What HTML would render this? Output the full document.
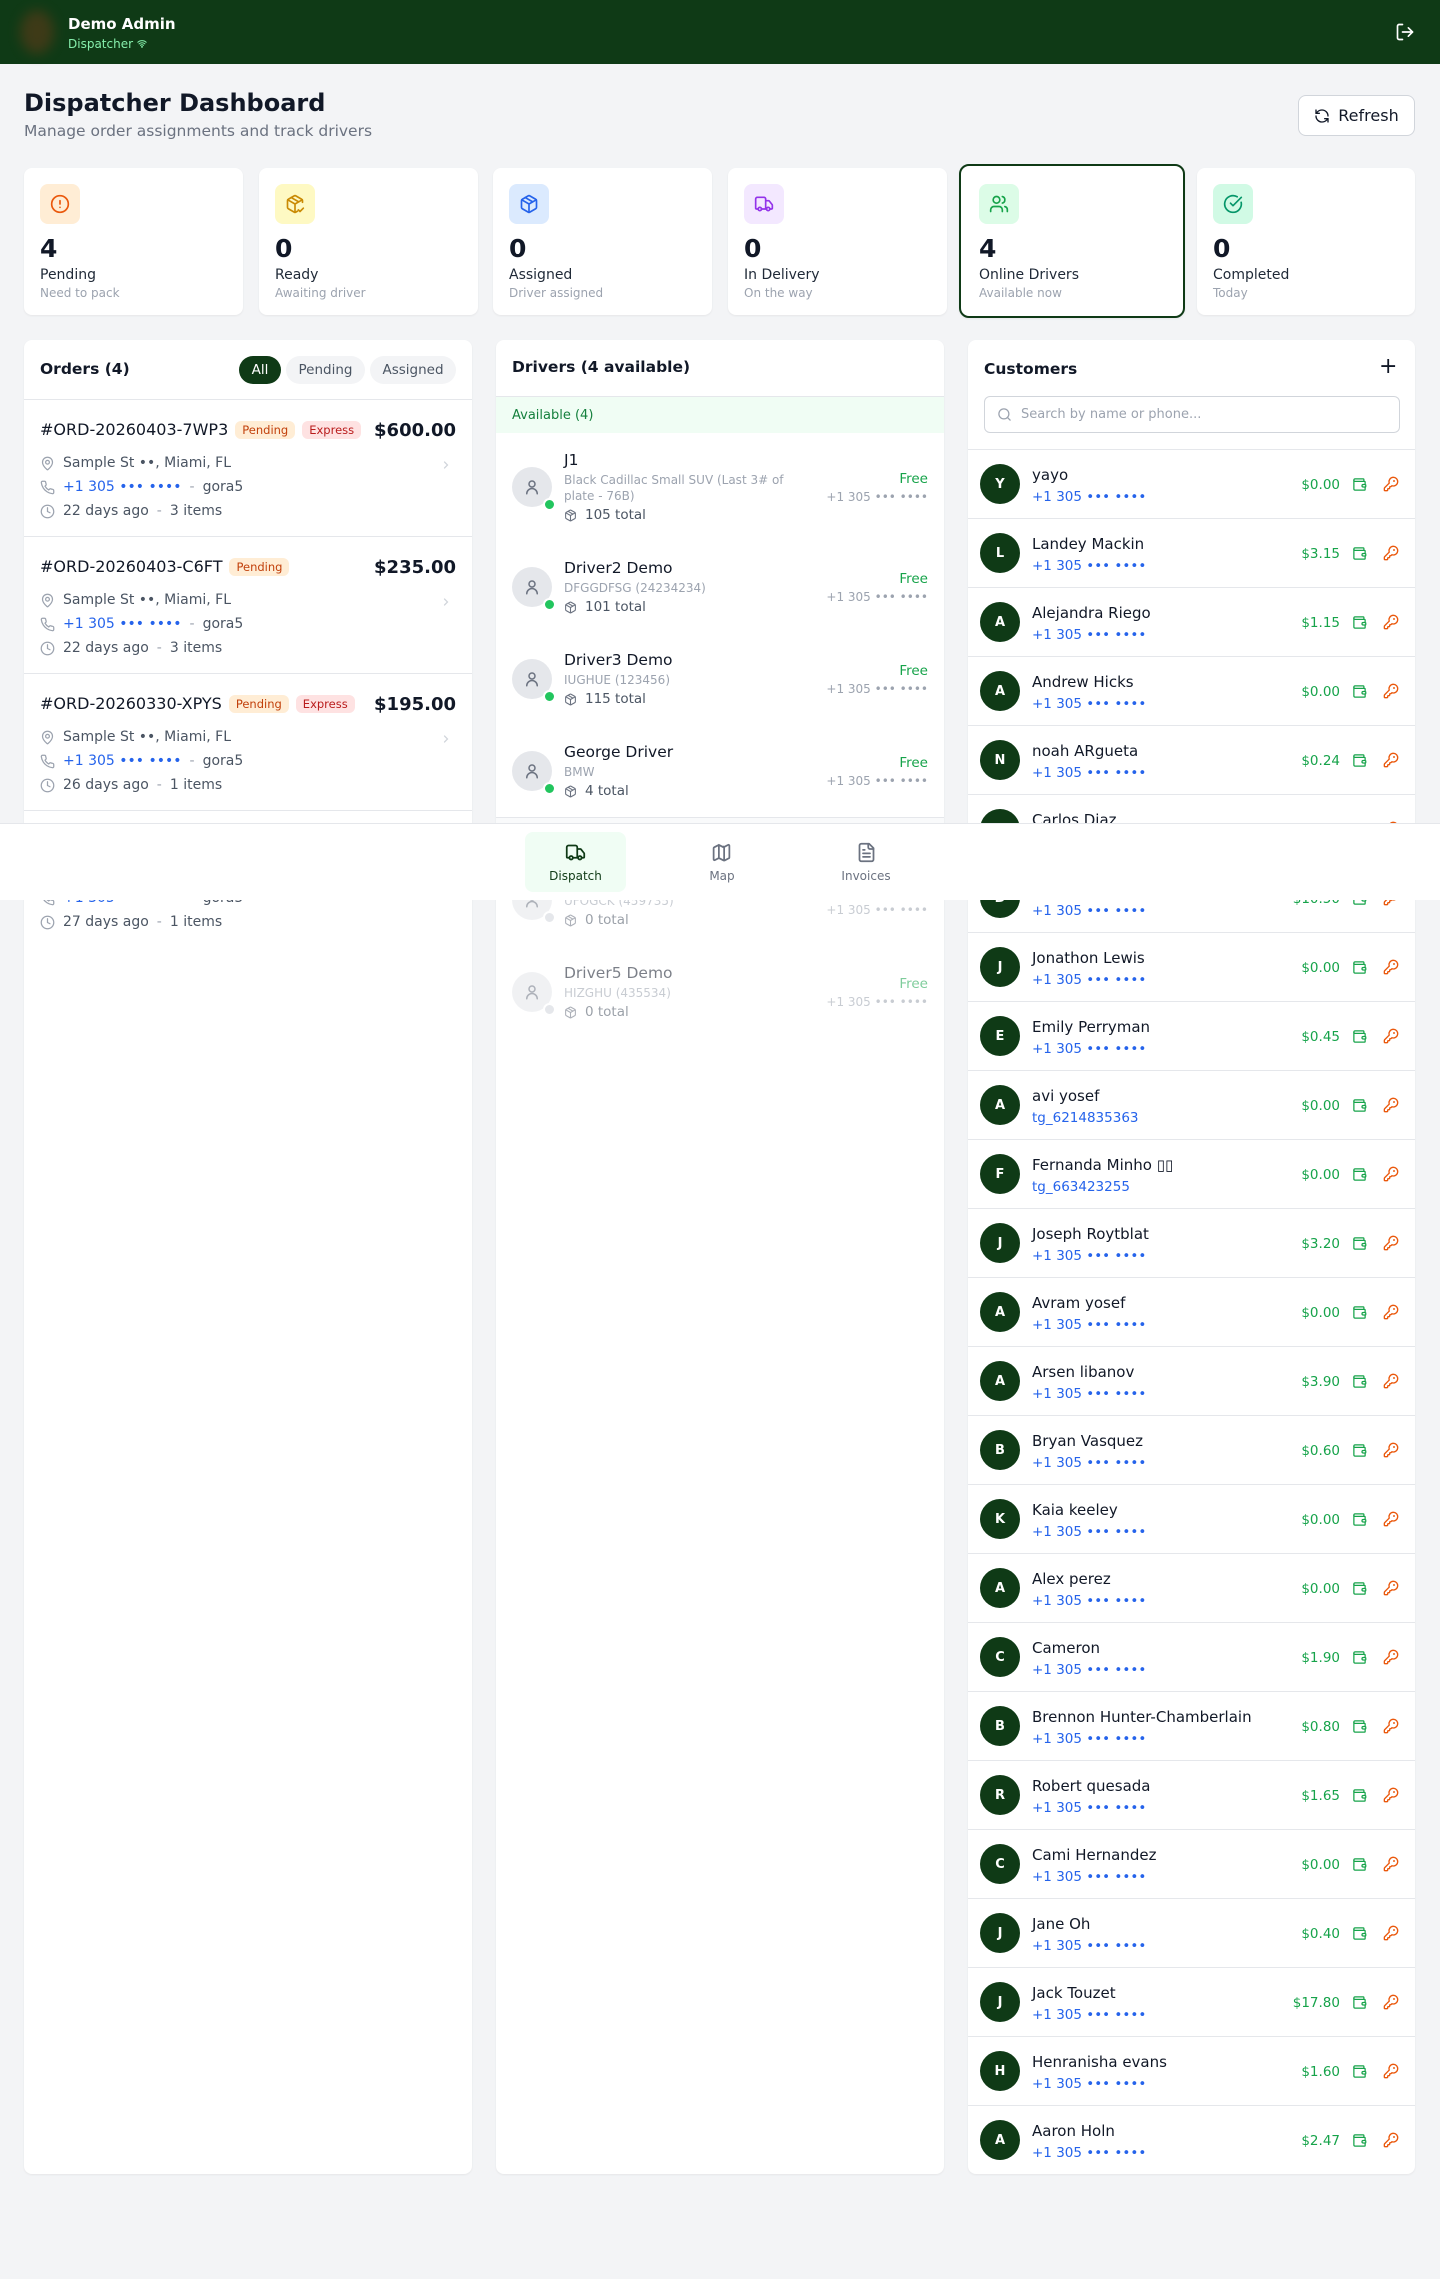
<!DOCTYPE html>
<html><head><meta charset="utf-8"><style>
*{box-sizing:border-box;margin:0;padding:0}
body{width:1440px;height:2279px;background:#f3f4f6;font-family:"DejaVu Sans","Liberation Sans","Noto Sans CJK SC",sans-serif;color:#111827;position:relative;overflow:hidden}
.abs{position:absolute}
.hdr{left:0;top:0;width:1440px;height:64px;background:#0f3a16}
.card{background:#fff;border-radius:8px;box-shadow:0 1px 2px rgba(0,0,0,.06)}
.stat{top:168px;width:219px;height:147px}
.ib{position:absolute;left:16px;top:16px;width:40px;height:40px;border-radius:8px;display:flex;align-items:center;justify-content:center}
.sn{position:absolute;left:16px;top:66px;font-size:25px;font-weight:bold}
.sl{position:absolute;left:16px;top:99px;font-size:14px;color:#1f2937}
.ss{position:absolute;left:16px;top:118px;font-size:12px;color:#9ca3af}
.ord{position:absolute;left:0;width:448px;height:137px;border-bottom:1px solid #e5e7eb}
.oid{position:absolute;left:16px;top:20px;font-size:16px;color:#111827;display:flex;align-items:center;gap:7px;white-space:nowrap}
.b{font-size:11.5px;padding:2px 7px;border-radius:6px}
.bp{background:#ffedd5;color:#c2410c}.be{background:#fee2e2;color:#b91c1c}
.amt{position:absolute;right:16px;top:20px;font-size:18px;font-weight:bold}
.ol{position:absolute;left:16px;font-size:14px;color:#4b5563;display:flex;align-items:center;gap:8px;white-space:nowrap}
.ol svg{flex:none}
.ph{color:#2563eb}
.chev{position:absolute;right:20px;top:57px}
.drv{position:absolute;left:0;width:448px}
.av{position:absolute;left:16px;width:40px;height:40px;border-radius:50%;background:#e5e7eb;display:flex;align-items:center;justify-content:center}
.dot{position:absolute;right:-4px;bottom:-4px;width:13px;height:13px;border-radius:50%;background:#22c55e;border:2px solid #fff}
.dn{position:absolute;left:68px;font-size:15.5px;color:#111827;line-height:18px}
.dsub{position:absolute;left:68px;font-size:12px;color:#9ca3af;line-height:16px;width:240px}
.dt{position:absolute;left:68px;font-size:13.5px;color:#4b5563;display:flex;align-items:center;gap:8px;line-height:16px}
.free{position:absolute;right:16px;font-size:13.5px;color:#16a34a;line-height:16px}
.dph{position:absolute;right:16px;font-size:12px;color:#9ca3af;line-height:16px}
.cr{position:absolute;left:0;width:448px;height:69px;border-bottom:1px solid #e5e7eb}
.ca{position:absolute;left:12px;top:14px;width:40px;height:40px;border-radius:50%;background:#0f3a16;color:#fff;font-weight:bold;font-size:13px;display:flex;align-items:center;justify-content:center}
.cn{position:absolute;left:64px;top:16px;font-size:15px;color:#111827;white-space:nowrap}
.cp{position:absolute;left:64px;top:39px;font-size:13.5px;color:#2563eb;white-space:nowrap}
.cm{position:absolute;right:76px;top:27px;font-size:13.5px;color:#16a34a}
.cw{position:absolute;right:49px;top:27px}
.ck{position:absolute;right:17px;top:26px}
</style></head><body>

<div class="abs hdr">
  <div class="abs" style="left:20px;top:10px;width:34px;height:44px;border-radius:50%;background:#4a3a18;filter:blur(6px);opacity:.8"></div>
  <div class="abs" style="left:68px;top:15px;color:#fff;font-weight:bold;font-size:15px">Demo Admin</div>
  <div class="abs" style="left:68px;top:37px;color:#86efac;font-size:12px">Dispatcher <svg width="10" height="9" viewBox="0 0 24 20" fill="none" stroke="#86efac" stroke-width="2.5" stroke-linecap="round"><path d="M2 7a15 15 0 0 1 20 0M5 11a10 10 0 0 1 14 0M8.5 14.5a5 5 0 0 1 7 0"/><circle cx="12" cy="18" r="1"/></svg></div>
  <svg class="abs" style="left:1395px;top:22px" width="20" height="20" viewBox="0 0 24 24" fill="none" stroke="#fff" stroke-width="2" stroke-linecap="round" stroke-linejoin="round"><path d="M9 21H5a2 2 0 0 1-2-2V5a2 2 0 0 1 2-2h4"/><path d="M16 17l5-5-5-5"/><path d="M21 12H9"/></svg>
</div>

<div class="abs" style="left:24px;top:89px;font-size:24px;font-weight:bold">Dispatcher Dashboard</div>
<div class="abs" style="left:24px;top:122px;font-size:15.5px;color:#6b7280">Manage order assignments and track drivers</div>
<div class="abs" style="left:1298px;top:95px;width:117px;height:41px;background:#fff;border:1px solid #d1d5db;border-radius:8px;display:flex;align-items:center;justify-content:center;gap:8px;font-size:16px">
<svg width="16" height="16" viewBox="0 0 24 24" fill="none" stroke="#111827" stroke-width="2" stroke-linecap="round" stroke-linejoin="round"><path d="M21 12a9 9 0 0 0-9-9 9.75 9.75 0 0 0-6.74 2.74L3 8"/><path d="M3 3v5h5"/><path d="M3 12a9 9 0 0 0 9 9 9.75 9.75 0 0 0 6.74-2.74L21 16"/><path d="M16 16h5v5"/></svg>Refresh</div>

<!-- stats -->
<div class="abs card stat" style="left:24px"><div class="ib" style="background:#ffedd5"><svg width="20" height="20" viewBox="0 0 24 24" fill="none" stroke="#ea580c" stroke-width="2" stroke-linecap="round"><circle cx="12" cy="12" r="10"/><path d="M12 8v4M12 16h.01"/></svg></div><div class="sn">4</div><div class="sl">Pending</div><div class="ss">Need to pack</div></div>
<div class="abs card stat" style="left:259px"><div class="ib" style="background:#fef9c3"><svg width="20" height="20" viewBox="0 0 24 24" fill="none" stroke="#ca8a04" stroke-width="2" stroke-linecap="round" stroke-linejoin="round"><path d="M21 10V8a2 2 0 0 0-1-1.73l-7-4a2 2 0 0 0-2 0l-7 4A2 2 0 0 0 3 8v8a2 2 0 0 0 1 1.73l7 4a2 2 0 0 0 2 0l2-1.14"/><path d="M3.3 7 12 12l8.7-5M12 22V12M16 19l2 2 4-4M7.5 4.27l9 5.15"/></svg></div><div class="sn">0</div><div class="sl">Ready</div><div class="ss">Awaiting driver</div></div>
<div class="abs card stat" style="left:493px"><div class="ib" style="background:#dbeafe"><svg width="20" height="20" viewBox="0 0 24 24" fill="none" stroke="#2563eb" stroke-width="2" stroke-linecap="round" stroke-linejoin="round"><path d="M21 8a2 2 0 0 0-1-1.73l-7-4a2 2 0 0 0-2 0l-7 4A2 2 0 0 0 3 8v8a2 2 0 0 0 1 1.73l7 4a2 2 0 0 0 2 0l7-4A2 2 0 0 0 21 16Z"/><path d="M3.3 7 12 12l8.7-5M12 22V12M7.5 4.27l9 5.15"/></svg></div><div class="sn">0</div><div class="sl">Assigned</div><div class="ss">Driver assigned</div></div>
<div class="abs card stat" style="left:728px"><div class="ib" style="background:#f3e8ff"><svg width="20" height="20" viewBox="0 0 24 24" fill="none" stroke="#9333ea" stroke-width="2" stroke-linecap="round" stroke-linejoin="round"><path d="M14 18V6a2 2 0 0 0-2-2H4a2 2 0 0 0-2 2v11a1 1 0 0 0 1 1h2M15 18H9M19 18h2a1 1 0 0 0 1-1v-3.65a1 1 0 0 0-.22-.62l-3.48-4.35A1 1 0 0 0 17.520 8H14"/><circle cx="17" cy="18" r="2"/><circle cx="7" cy="18" r="2"/></svg></div><div class="sn">0</div><div class="sl">In Delivery</div><div class="ss">On the way</div></div>
<div class="abs card" style="left:959px;top:164px;width:226px;height:154px;border:2px solid #0f3a16;border-radius:10px"><div class="ib" style="background:#dcfce7;left:18px;top:18px"><svg width="20" height="20" viewBox="0 0 24 24" fill="none" stroke="#16a34a" stroke-width="2" stroke-linecap="round" stroke-linejoin="round"><path d="M16 21v-2a4 4 0 0 0-4-4H6a4 4 0 0 0-4 4v2"/><circle cx="9" cy="7" r="4"/><path d="M22 21v-2a4 4 0 0 0-3-3.87M16 3.13a4 4 0 0 1 0 7.75"/></svg></div><div class="sn" style="left:18px;top:68px">4</div><div class="sl" style="left:18px;top:101px">Online Drivers</div><div class="ss" style="left:18px;top:120px">Available now</div></div>
<div class="abs card stat" style="left:1197px;width:218px"><div class="ib" style="background:#d1fae5"><svg width="20" height="20" viewBox="0 0 24 24" fill="none" stroke="#059669" stroke-width="2" stroke-linecap="round" stroke-linejoin="round"><path d="M21.8 10A10 10 0 1 1 17 3.34"/><path d="m9 11 3 3L22 4"/></svg></div><div class="sn">0</div><div class="sl">Completed</div><div class="ss">Today</div></div>

<!-- Orders -->
<div class="abs card" style="left:24px;top:340px;width:448px;height:1834px;overflow:hidden">
  <div class="abs" style="left:16px;top:20px;font-size:15.5px;font-weight:bold">Orders (4)</div>
  <div class="abs" style="left:215px;top:16px;width:42px;height:28px;border-radius:14px;background:#0f3a16;color:#fff;font-size:13.5px;display:flex;align-items:center;justify-content:center">All</div>
  <div class="abs" style="left:262px;top:16px;width:79px;height:28px;border-radius:14px;background:#f3f4f6;color:#4b5563;font-size:13.5px;display:flex;align-items:center;justify-content:center">Pending</div>
  <div class="abs" style="left:346px;top:16px;width:86px;height:28px;border-radius:14px;background:#f3f4f6;color:#4b5563;font-size:13.5px;display:flex;align-items:center;justify-content:center">Assigned</div>
  <div class="abs" style="left:0;top:59px;width:448px;border-top:1px solid #e5e7eb"></div>
  <div id="ol"></div>
</div>

<!-- Drivers -->
<div class="abs card" style="left:496px;top:340px;width:448px;height:1834px;overflow:hidden">
  <div class="abs" style="left:16px;top:18px;font-size:15.5px;font-weight:bold">Drivers (4 available)</div>
  <div class="abs" style="left:0;top:56px;width:448px;height:37px;background:#f0fdf4;border-top:1px solid #e5e7eb;color:#15803d;font-size:13px;padding:11px 16px">Available (4)</div>
  <div id="dl"></div>
</div>

<!-- Customers -->
<div class="abs card" style="left:968px;top:340px;width:447px;height:1834px;overflow:hidden">
  <div class="abs" style="left:16px;top:20px;font-size:15.5px;font-weight:bold">Customers</div>
  <div class="abs" style="left:411px;top:14px;font-size:22px;color:#111827">+</div>
  <div class="abs" style="left:16px;top:56px;width:416px;height:37px;border:1px solid #d1d5db;border-radius:6px;font-size:13px;color:#9ca3af;padding:10px 0 0 36px">Search by name or phone...
    <svg class="abs" style="left:12px;top:10px" width="15" height="15" viewBox="0 0 24 24" fill="none" stroke="#9ca3af" stroke-width="2" stroke-linecap="round"><circle cx="11" cy="11" r="8"/><path d="m21 21-4.3-4.3"/></svg></div>
  <div class="abs" style="left:0;top:109px;width:448px;border-top:1px solid #e5e7eb"></div>
  <div id="cl"></div>
</div>

<!-- bottom nav -->
<div class="abs" style="left:0;top:823px;width:1440px;height:77px;background:#fff;border-top:1px solid #e5e7eb">
  <div class="abs" style="left:525px;top:8px;width:101px;height:60px;border-radius:8px;background:#f0fdf4"></div>
  <svg class="abs" style="left:565px;top:18px" width="21" height="21" viewBox="0 0 24 24" fill="none" stroke="#0f3a16" stroke-width="2" stroke-linecap="round" stroke-linejoin="round"><path d="M14 18V6a2 2 0 0 0-2-2H4a2 2 0 0 0-2 2v11a1 1 0 0 0 1 1h2M15 18H9M19 18h2a1 1 0 0 0 1-1v-3.65a1 1 0 0 0-.22-.62l-3.48-4.35A1 1 0 0 0 17.52 8H14"/><circle cx="17" cy="18" r="2"/><circle cx="7" cy="18" r="2"/></svg>
  <div class="abs" style="left:525px;top:45px;width:101px;text-align:center;font-size:12px;color:#0f3a16">Dispatch</div>
  <svg class="abs" style="left:711px;top:18px" width="21" height="21" viewBox="0 0 24 24" fill="none" stroke="#6b7280" stroke-width="2" stroke-linecap="round" stroke-linejoin="round"><path d="M14.1 5.9 9.9 3.8a2 2 0 0 0-1.8 0L3.6 6.1A1 1 0 0 0 3 7v12.8a1 1 0 0 0 1.4.9l3.7-1.9a2 2 0 0 1 1.8 0l4.2 2.1a2 2 0 0 0 1.8 0l4.5-2.3a1 1 0 0 0 .6-.9V4.2a1 1 0 0 0-1.4-.9l-3.7 1.9a2 2 0 0 1-1.8 0zM15 5.8v15M9 3.2v15"/></svg>
  <div class="abs" style="left:672px;top:45px;width:100px;text-align:center;font-size:12px;color:#6b7280">Map</div>
  <svg class="abs" style="left:856px;top:18px" width="21" height="21" viewBox="0 0 24 24" fill="none" stroke="#6b7280" stroke-width="2" stroke-linecap="round" stroke-linejoin="round"><path d="M15 2H6a2 2 0 0 0-2 2v16a2 2 0 0 0 2 2h12a2 2 0 0 0 2-2V7Z"/><path d="M14 2v4a2 2 0 0 0 2 2h4M10 9H8M16 13H8M16 17H8"/></svg>
  <div class="abs" style="left:816px;top:45px;width:100px;text-align:center;font-size:12px;color:#6b7280">Invoices</div>
</div>

<script>
const pin='<svg width="15" height="15" viewBox="0 0 24 24" fill="none" stroke="#9ca3af" stroke-width="2"><path d="M20 10c0 5-5.5 10.2-7.4 11.8a1 1 0 0 1-1.2 0C9.5 20.2 4 15 4 10a8 8 0 0 1 16 0"/><circle cx="12" cy="10" r="3"/></svg>';
const phn='<svg width="15" height="15" viewBox="0 0 24 24" fill="none" stroke="#9ca3af" stroke-width="2" stroke-linejoin="round"><path d="M22 16.9v3a2 2 0 0 1-2.2 2 19.8 19.8 0 0 1-8.6-3.1 19.5 19.5 0 0 1-6-6A19.8 19.8 0 0 1 2.1 4.2 2 2 0 0 1 4.1 2h3a2 2 0 0 1 2 1.7c.1 1 .4 1.9.7 2.8a2 2 0 0 1-.5 2.1L8 9.9a16 16 0 0 0 6 6l1.3-1.3a2 2 0 0 1 2.1-.4c.9.3 1.8.6 2.8.7a2 2 0 0 1 1.7 2z"/></svg>';
const clk='<svg width="15" height="15" viewBox="0 0 24 24" fill="none" stroke="#9ca3af" stroke-width="2" stroke-linecap="round"><circle cx="12" cy="12" r="10"/><path d="M12 6v6l4 2"/></svg>';
const chev='<svg width="12" height="14" viewBox="0 0 24 24" fill="none" stroke="#d1d5db" stroke-width="2.5" stroke-linecap="round"><path d="m9 18 6-6-6-6"/></svg>';
const orders=[["#ORD-20260403-7WP3",1,"$600.00","22 days ago","3 items"],["#ORD-20260403-C6FT",0,"$235.00","22 days ago","3 items"],["#ORD-20260330-XPYS",1,"$195.00","26 days ago","1 items"],["#ORD-20260329-K2LM",0,"$120.00","27 days ago","1 items"]];
let h='';orders.forEach((o,i)=>{const t=60+i*137;h+=`<div class="ord" style="top:${t}px;${i==3?'border-bottom:none':''}"><div class="oid">${o[0]}<span class="b bp">Pending</span>${o[1]?'<span class="b be">Express</span>':''}</div><div class="amt">${o[2]}</div><div class="ol" style="top:55px">${pin}<span>Sample St ••, Miami, FL</span></div><div class="ol" style="top:79px">${phn}<span class="ph">+1 305 ••• ••••</span><span style="color:#9ca3af">-</span><span>gora5</span></div><div class="ol" style="top:103px">${clk}<span>${o[3]}</span><span style="color:#9ca3af">-</span><span>${o[4]}</span></div><div class="chev">${chev}</div></div>`});
document.getElementById('ol').innerHTML=h;
const box='<svg width="13" height="13" viewBox="0 0 24 24" fill="none" stroke="#6b7280" stroke-width="2" stroke-linejoin="round"><path d="M21 8a2 2 0 0 0-1-1.73l-7-4a2 2 0 0 0-2 0l-7 4A2 2 0 0 0 3 8v8a2 2 0 0 0 1 1.73l7 4a2 2 0 0 0 2 0l7-4A2 2 0 0 0 21 16Z"/><path d="M3.3 7 12 12l8.7-5M12 22V12M7.5 4.27l9 5.15"/></svg>';
const user='<svg width="18" height="18" viewBox="0 0 24 24" fill="none" stroke="#6b7280" stroke-width="2" stroke-linecap="round"><circle cx="12" cy="8" r="4"/><path d="M5 21a7 7 0 0 1 14 0"/></svg>';
const dr=[["J1",["Black Cadillac Small SUV (Last 3# of","plate - 76B)"],"105 total",147,1],["Driver2 Demo",["DFGGDFSG (24234234)"],"101 total",247,1],["Driver3 Demo",["IUGHUE (123456)"],"115 total",339,1],["George Driver",["BMW"],"4 total",431,1],["Driver4 Demo",["UFOGCK (459735)"],"0 total",560,0],["Driver5 Demo",["HIZGHU (435534)"],"0 total",652,0]];
h='';dr.forEach(d=>{const c=d[3];const n=d[1].length;const off=n==2?8:0;const op=d[4]?1:.55;
h+=`<div class="drv" style="top:0;opacity:${op}"><div class="av" style="top:${c-20}px">${user}<div class="dot" style="background:${d[4]?'#22c55e':'#d1d5db'}"></div></div><div class="dn" style="top:${c-28-off}px">${d[0]}</div><div class="dsub" style="top:${c-7-off}px">${d[1].join('<br>')}</div><div class="dt" style="top:${c+12+off}px">${box}${d[2]}</div><div class="free" style="top:${c-16}px">Free</div><div class="dph" style="top:${c+2}px">+1 305 ••• ••••</div></div>`});
h+=`<div class="abs" style="left:0;top:477px;width:448px;border-top:1px solid #e5e7eb"></div><div class="abs" style="left:0;top:478px;width:448px;height:36px;background:#f9fafb;color:#6b7280;font-size:13px;padding:10px 16px">Offline (2)</div>`;
document.getElementById('dl').innerHTML=h;
const cs=[["yayo","$0.00"],["Landey Mackin","$3.15"],["Alejandra Riego","$1.15"],["Andrew Hicks","$0.00"],["noah ARgueta","$0.24"],["Carlos Diaz","$0.00"],["David Cohen","$10.50"],["Jonathon Lewis","$0.00"],["Emily Perryman","$0.45"],["avi yosef","$0.00","tg_6214835363"],["Fernanda Minho \u25af\u25af","$0.00","tg_663423255"],["Joseph Roytblat","$3.20"],["Avram yosef","$0.00"],["Arsen libanov","$3.90"],["Bryan Vasquez","$0.60"],["Kaia keeley","$0.00"],["Alex perez","$0.00"],["Cameron","$1.90"],["Brennon Hunter-Chamberlain","$0.80"],["Robert quesada","$1.65"],["Cami Hernandez","$0.00"],["Jane Oh","$0.40"],["Jack Touzet","$17.80"],["Henranisha evans","$1.60"],["Aaron Holn","$2.47"]];
const wal='<svg width="15" height="15" viewBox="0 0 24 24" fill="none" stroke="#16a34a" stroke-width="2" stroke-linejoin="round"><path d="M19 7V4a1 1 0 0 0-1-1H5a2 2 0 0 0 0 4h15a1 1 0 0 1 1 1v4h-3a2 2 0 0 0 0 4h3a1 1 0 0 0 1-1v-2a1 1 0 0 0-1-1"/><path d="M3 5v14a2 2 0 0 0 2 2h15a1 1 0 0 0 1-1v-4"/></svg>';
const key='<svg width="16" height="16" viewBox="0 0 24 24" fill="none" stroke="#ea580c" stroke-width="2" stroke-linecap="round" stroke-linejoin="round"><path d="M2.586 17.414A2 2 0 0 0 2 18.828V21a1 1 0 0 0 1 1h3a1 1 0 0 0 1-1v-1a1 1 0 0 1 1-1h1a1 1 0 0 0 1-1v-1a1 1 0 0 1 1-1h.172a2 2 0 0 0 1.414-.586l.814-.814a6.5 6.5 0 1 0-4-4z"/><circle cx="16.5" cy="7.5" r=".5" fill="#ea580c"/></svg>';
h='';cs.forEach((c,i)=>{const t=110+i*69;h+=`<div class="cr" style="top:${t}px;${i==24?'border-bottom:none':''}"><div class="ca">${c[0][0].toUpperCase()}</div><div class="cn">${c[0]}</div><div class="cp">${c[2]||'+1 305 ••• ••••'}</div><div class="cm">${c[1]}</div><div class="cw">${wal}</div><div class="ck">${key}</div></div>`});
document.getElementById('cl').innerHTML=h;
</script>
</body></html>
